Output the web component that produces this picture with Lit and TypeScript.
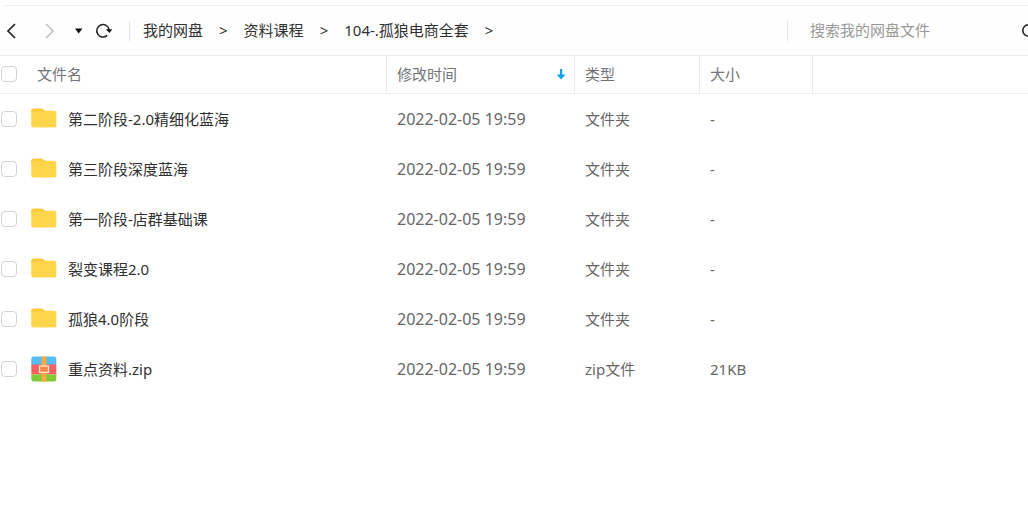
import { LitElement, html, css, svg } from "lit";
import { customElement, property, state } from "lit/decorators.js";

interface FileEntry {
  name: string;
  modified: string;
  type: string;
  size: string;
  kind: "folder" | "zip";
}

const MODIFIED = "2022-02-05 19:59";

const folder = (name: string): FileEntry => ({
  name,
  modified: MODIFIED,
  type: "文件夹",
  size: "-",
  kind: "folder",
});

@customElement("file-icon")
export class FileIcon extends LitElement {
  @property() kind: "folder" | "zip" = "folder";

  static styles = css`
    :host {
      display: block;
      flex: none;
      width: 26px;
      height: 26px;
    }
    svg {
      display: block;
    }
  `;

  render() {
    const art =
      this.kind === "folder"
        ? svg`
          <path d="M.3 8V5a2.500 2.500 0 0 1 2.500-2.500h7.400c.8 0 1.500.3 2 .8L14.500 5.500V8z" fill="#f8c936"/>
          <rect x=".3" y="4.800" width="25" height="16.800" rx="2.200" fill="#ffd64b"/>
          <path d="M.3 6.500V5a2.500 2.500 0 0 1 .3-1.200h12.200l1.800 1.700z" fill="#fbcd3e"/>`
        : svg`
          <defs><clipPath id="c"><rect x=".3" y=".5" width="25" height="25" rx="2.500"/></clipPath></defs>
          <g clip-path="url(#c)">
            <path d="M0 0h26v9H0z" fill="#55bdf2"/>
            <path d="M0 8.500h26v10H0z" fill="#fb5f5f"/>
            <path d="M0 18.500h26V26H0z" fill="#7fca35"/>
            <path d="M10.500 0h5v26h-5z" fill="#f5ab3d"/>
          </g>
          <rect x="8.500" y="10" width="9" height="6.400" fill="#f58a49" stroke="#ffe6cf" stroke-width="1.300"/>`;
    return html`<svg width="26" height="26" viewBox="0 0 26 26" aria-hidden="true">${art}</svg>`;
  }
}

@customElement("app-root")
export class AppRoot extends LitElement {
  @state() private files: FileEntry[] = [
    folder("第二阶段-2.0精细化蓝海"),
    folder("第三阶段深度蓝海"),
    folder("第一阶段-店群基础课"),
    folder("裂变课程2.0"),
    folder("孤狼4.0阶段"),
    { name: "重点资料.zip", modified: MODIFIED, type: "zip文件", size: "21KB", kind: "zip" },
  ];

  @state() private path = ["我的网盘", "资料课程", "104-.孤狼电商全套"];

  static styles = css`
    :host {
      display: block;
      min-height: 100vh;
      overflow: hidden;
      background: #fff;
      color: #303030;
      font: 15px/20px "Noto Sans", "Noto Sans CJK SC", sans-serif;
    }
    * {
      box-sizing: border-box;
    }
    button {
      display: grid;
      place-items: center;
      padding: 0;
      border: 0;
      background: none;
      color: #222;
    }
    svg {
      display: block;
    }
    .top {
      height: 6px;
      margin-left: 5px;
      border-bottom: 1px solid #ebebeb;
    }
    .toolbar {
      display: flex;
      align-items: center;
      height: 50px;
      border-bottom: 1px solid #ebebeb;
      background: #fefefe;
    }
    .controls {
      display: flex;
      align-items: center;
      padding-left: 4px;
    }
    .back,
    .forward {
      width: 16px;
      height: 24px;
    }
    .forward {
      margin-left: 22px;
      color: #c4c4c4;
    }
    .history {
      width: 12px;
      height: 24px;
      margin-left: 14px;
    }
    .reload {
      width: 20px;
      height: 24px;
      margin-left: 10px;
    }
    .divider {
      flex: none;
      width: 1px;
      height: 20px;
      background: #e3e3e3;
    }
    .controls .divider {
      margin-left: 15px;
    }
    .path {
      flex: 1;
      display: flex;
      gap: 16px;
      padding: 0 0 2px 13px;
      white-space: nowrap;
    }
    .path a {
      color: inherit;
      text-decoration: none;
    }
    .search {
      flex: none;
      display: flex;
      align-items: center;
      width: 251px;
      margin-right: -10px;
    }
    .search input {
      flex: 1;
      min-width: 0;
      padding: 0 0 2px 22px;
      border: 0;
      outline: 0;
      background: none;
      color: #303030;
      font: inherit;
    }
    .search input::placeholder {
      color: #999;
      opacity: 1;
    }
    table {
      width: 100%;
      table-layout: fixed;
      border-collapse: separate;
      border-spacing: 0;
    }
    .name-col {
      width: 387px;
    }
    .time-col {
      width: 188px;
    }
    .type-col {
      width: 125px;
    }
    .size-col {
      width: 113px;
    }
    th,
    td {
      padding: 0 10px;
      text-align: left;
      font-weight: 400;
      white-space: nowrap;
    }
    th {
      height: 38px;
      padding: 0 8px 2px 10px;
      border-right: 1px solid #ebebeb;
      border-bottom: 1px solid #f0f0f0;
      color: #737478;
    }
    th:last-child {
      border-right: 0;
    }
    td {
      height: 50px;
      color: #666;
    }
    .name,
    .heading {
      padding-left: 1px;
    }
    .name {
      color: #303030;
    }
    .line {
      display: flex;
      align-items: center;
    }
    .heading .line {
      gap: 20px;
    }
    .sort {
      justify-content: space-between;
    }
    input[type="checkbox"] {
      appearance: none;
      flex: none;
      width: 16px;
      height: 16px;
      margin: 0;
      border: 1px solid #d2d2d4;
      border-radius: 4px;
      background: #fff;
    }
    input[type="checkbox"]:checked {
      border-color: #06a7ff;
      background: #06a7ff;
    }
    file-icon {
      margin: 0 11px 0 14px;
    }
    .time {
      font-size: 16px;
    }
  `;

  private renderToolbar() {
    return html`
      <header class="toolbar">
        <div class="controls">
          <button class="back" aria-label="后退">
            <svg width="16" height="18" viewBox="0 0 16 18" fill="none" stroke="currentColor" stroke-width="1.700">
              <path d="M11 2 4 9l7 7" />
            </svg>
          </button>
          <button class="forward" aria-label="前进" disabled>
            <svg width="16" height="18" viewBox="0 0 16 18" fill="none" stroke="currentColor" stroke-width="1.700">
              <path d="m4 2 7 7-7 7" />
            </svg>
          </button>
          <button class="history" aria-label="历史记录">
            <svg width="12" height="10" viewBox="0 0 12 10"><path d="M3 2.500h7.400L6.700 7.600z" fill="#111" /></svg>
          </button>
          <button class="reload" aria-label="刷新">
            <svg width="20" height="20" viewBox="0 0 20 20">
              <path d="M13.200 14.400A6.200 6.200 0 1 1 15.100 8.800" fill="none" stroke="#222" stroke-width="1.500" />
              <path d="M11.800 8.200h6.600l-3 3.900z" fill="#111" />
            </svg>
          </button>
          <span class="divider"></span>
        </div>
        <nav class="path" aria-label="路径">
          ${this.path.map((part) => html`<a href="#">${part}</a><span>&gt;</span>`)}
        </nav>
        <div class="search">
          <span class="divider"></span>
          <input type="text" aria-label="搜索" placeholder="搜索我的网盘文件" />
          <button aria-label="开始搜索">
            <svg width="18" height="18" viewBox="0 0 18 18" fill="none" stroke="#222" stroke-width="1.600">
              <circle cx="8.500" cy="8.500" r="5.700" />
              <path d="m12.500 12.500 4 4" />
            </svg>
          </button>
        </div>
      </header>
    `;
  }

  render() {
    return html`
      <div class="top"></div>
      ${this.renderToolbar()}
      <table>
        <colgroup>
          <col class="name-col" />
          <col class="time-col" />
          <col class="type-col" />
          <col class="size-col" />
          <col />
        </colgroup>
        <thead>
          <tr>
            <th class="heading">
              <div class="line"><input type="checkbox" aria-label="全选" /><span>文件名</span></div>
            </th>
            <th>
              <div class="line sort">
                <span>修改时间</span>
                <svg width="10" height="14" viewBox="0 0 10 14" aria-hidden="true">
                  <path d="M4 2h2.200v5.500H9.500L5.100 12.500.7 7.500H4z" fill="#0aa0f5" />
                </svg>
              </div>
            </th>
            <th>类型</th>
            <th>大小</th>
            <th></th>
          </tr>
        </thead>
        <tbody>
          ${this.files.map(
            (file, i) => html`
              <tr>
                <td class="name">
                  <div class="line">
                    <input type="checkbox" id="file-${i}" />
                    <file-icon kind=${file.kind}></file-icon>
                    <label for="file-${i}">${file.name}</label>
                  </div>
                </td>
                <td class="time">${file.modified}</td>
                <td>${file.type}</td>
                <td>${file.size}</td>
                <td></td>
              </tr>
            `,
          )}
        </tbody>
      </table>
    `;
  }
}
